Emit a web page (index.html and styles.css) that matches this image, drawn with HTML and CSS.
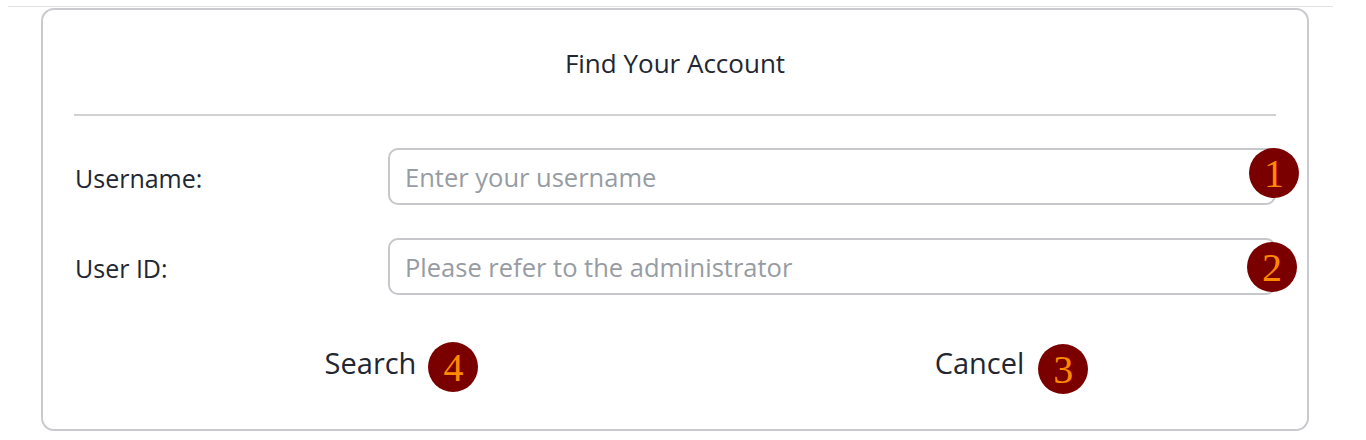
FILE: index.html
```html
<!DOCTYPE html>
<html lang="en">
<head>
<meta charset="utf-8">
<title>Find Your Account</title>
<link rel="stylesheet" href="styles.css">
</head>
<body>
<div class="page">
  <div class="top-rule"></div>
  <form class="card">
    <h1 class="title">Find Your Account</h1>
    <hr class="divider">
    <div class="row">
      <label class="label" for="username">Username:</label>
      <div class="field">
        <input id="username" class="input" type="text" placeholder="Enter your username">
        <span class="badge badge-field badge-one">1</span>
      </div>
    </div>
    <div class="row row-second">
      <label class="label" for="userid">User ID:</label>
      <div class="field">
        <input id="userid" class="input" type="text" placeholder="Please refer to the administrator">
        <span class="badge badge-field badge-two">2</span>
      </div>
    </div>
    <div class="actions">
      <div class="action-cell">
        <button type="button" class="btn">Search<span class="badge badge-btn badge-search">4</span></button>
      </div>
      <div class="action-cell">
        <button type="button" class="btn">Cancel<span class="badge badge-btn badge-cancel">3</span></button>
      </div>
    </div>
  </form>
</div>
</body>
</html>
```

FILE: styles.css
```css
html, body {
  margin: 0;
  padding: 0;
  background: #ffffff;
}

body {
  font-family: "Open Sans", "Noto Sans", sans-serif;
  color: #222630;
}

.page {
  padding: 6px 0 0 8px;
  width: 1325px;
}

.top-rule {
  height: 1px;
  background: #e2e2e4;
  width: 1325px;
}

.card {
  box-sizing: border-box;
  margin: 1px 0 0 33px;
  width: 1268px;
  height: 423px;
  border: 2px solid #c9cacd;
  border-radius: 13px;
  padding: 0 31px;
  display: flex;
  flex-direction: column;
}

.title {
  margin: 0;
  padding-top: 36px;
  height: 34px;
  line-height: 34px;
  font-size: 26px;
  font-weight: 400;
  text-align: center;
  color: #222630;
}

.divider {
  margin: 34px 0 0 0;
  border: 0;
  height: 2px;
  background: #d0d1d3;
}

.row {
  display: flex;
  align-items: center;
  height: 57px;
  margin-top: 32px;
}

.row-second {
  margin-top: 33px;
}

.label {
  width: 314px;
  flex: none;
  box-sizing: border-box;
  padding-left: 1px;
  padding-top: 3px;
  font-size: 25px;
  line-height: 34px;
  color: #222630;
}

.field {
  position: relative;
  width: 888px;
  height: 57px;
}

.input {
  box-sizing: border-box;
  display: block;
  width: 888px;
  height: 57px;
  border: 2px solid #c6c7cb;
  border-radius: 10px;
  padding: 0 15px;
  font-family: "Open Sans", "Noto Sans", sans-serif;
  font-size: 25.5px;
  color: #222630;
  background: #fff;
  outline: none;
}

.input::placeholder {
  color: #979ca3;
}

.badge {
  position: absolute;
  width: 50px;
  height: 50px;
  border-radius: 50%;
  background: #7a0000;
  color: #ff8a00;
  font-family: "Liberation Serif", "DejaVu Serif", serif;
  font-size: 40px;
  line-height: 52px;
  text-align: center;
}

.badge-one {
  right: -23px;
  top: 0;
}

.badge-two {
  right: -21px;
  top: 4px;
}

.actions {
  display: grid;
  grid-template-columns: 1fr 1fr;
  column-gap: 16px;
  margin-top: 49px;
}

.action-cell {
  display: flex;
  justify-content: center;
}

.btn {
  position: relative;
  border: 0;
  background: transparent;
  padding: 0;
  font-family: "Open Sans", "Noto Sans", sans-serif;
  font-size: 29px;
  color: #222630;
  line-height: 38px;
  height: 38px;
  cursor: pointer;
}

.badge-btn {
  left: 100%;
}

.badge-search {
  margin-left: 12px;
  top: -2px;
}

.badge-cancel {
  margin-left: 14px;
  top: 0;
}
```
